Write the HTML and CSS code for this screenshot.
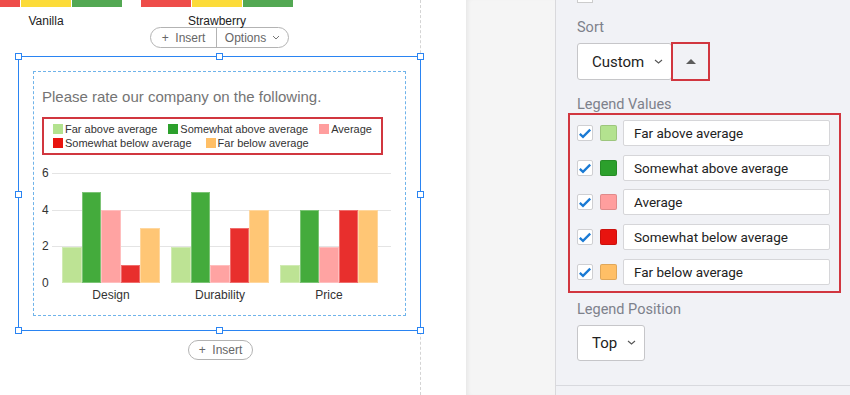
FILE: index.html
```html
<!DOCTYPE html>
<html>
<head>
    <title>Chart Options</title>
    <link rel="stylesheet" href="styles.css">
</head>
<body>
    <div class="screen">
        <div class="canvas">
            <div class="page">
                <div class="strips">
                    <div class="strip"><span class="seg seg-red"></span><span class="seg seg-yellow"></span><span class="seg seg-green"></span></div>
                    <div class="strip"><span class="seg seg-red"></span><span class="seg seg-yellow"></span><span class="seg seg-green"></span></div>
                </div>
                <div class="strip-labels">
                    <span>Vanilla</span>
                    <span>Strawberry</span>
                </div>
                <div class="pill pill-options">
                    <span class="pill-part pill-insert">+&nbsp; Insert</span>
                    <span class="pill-part pill-more">Options
                        <svg class="chev" width="8" height="5" viewBox="0 0 8 5"><path d="M1 1 L4 4 L7 1" fill="none" stroke="#777" stroke-width="1"/></svg>
                    </span>
                </div>

                <div class="selected">
                    <span class="handle h-tl"></span><span class="handle h-tc"></span><span class="handle h-tr"></span>
                    <span class="handle h-ml"></span><span class="handle h-mr"></span>
                    <span class="handle h-bl"></span><span class="handle h-bc"></span><span class="handle h-br"></span>

                    <div class="question">
                        <div class="q-title">Please rate our company on the following.</div>
                        <div class="legend">
                            <div class="legend-row">
                                <span class="legend-item"><i class="sw c1"></i>Far above average</span>
                                <span class="legend-item"><i class="sw c2"></i>Somewhat above average</span>
                                <span class="legend-item"><i class="sw c3"></i>Average</span>
                            </div>
                            <div class="legend-row">
                                <span class="legend-item"><i class="sw c4"></i>Somewhat below average</span>
                                <span class="legend-item"><i class="sw c5"></i>Far below average</span>
                            </div>
                        </div>
                        <div class="chart">
                            <div class="y-axis">
                                <span>6</span><span>4</span><span>2</span><span>0</span>
                            </div>
                            <div class="plot-wrap">
                                <div class="plot">
                                    <div class="group">
                                        <span class="bar b1" style="height: 36.5px"></span>
                                        <span class="bar b2" style="height: 91.25px"></span>
                                        <span class="bar b3" style="height: 73px"></span>
                                        <span class="bar b4" style="height: 18.25px"></span>
                                        <span class="bar b5" style="height: 54.75px"></span>
                                    </div>
                                    <div class="group">
                                        <span class="bar b1" style="height: 36.5px"></span>
                                        <span class="bar b2" style="height: 91.25px"></span>
                                        <span class="bar b3" style="height: 18.25px"></span>
                                        <span class="bar b4" style="height: 54.75px"></span>
                                        <span class="bar b5" style="height: 73px"></span>
                                    </div>
                                    <div class="group">
                                        <span class="bar b1" style="height: 18.25px"></span>
                                        <span class="bar b2" style="height: 73px"></span>
                                        <span class="bar b3" style="height: 36.5px"></span>
                                        <span class="bar b4" style="height: 73px"></span>
                                        <span class="bar b5" style="height: 73px"></span>
                                    </div>
                                </div>
                                <div class="cats">
                                    <span>Design</span>
                                    <span>Durability</span>
                                    <span>Price</span>
                                </div>
                            </div>
                        </div>
                    </div>
                </div>

                <div class="pill pill-bottom">
                    <span class="pill-part">+&nbsp; Insert</span>
                </div>
            </div>
        </div>

        <div class="gutter"></div>

        <div class="panel">
            <div class="settings">
                <div class="top-check"></div>

                <div class="field-label label-sort">Sort</div>
                <div class="sort-row">
                    <div class="select select-sort">Custom
                        <svg class="chev" width="9" height="5" viewBox="0 0 9 5"><path d="M1 1 L4.5 4 L8 1" fill="none" stroke="#555" stroke-width="1.1"/></svg>
                    </div>
                    <div class="sort-btn"><span class="tri"></span></div>
                </div>

                <div class="field-label label-values">Legend Values</div>
                <div class="values">
                    <div class="value-row">
                        <span class="check"><svg width="14" height="14" viewBox="0 0 14 14"><path d="M1.8 7.8 L5 10.8 L12.2 3.6" fill="none" stroke="#1a7ad4" stroke-width="2.3"/></svg></span>
                        <span class="swatch s1"></span>
                        <div class="text-input">Far above average</div>
                    </div>
                    <div class="value-row">
                        <span class="check"><svg width="14" height="14" viewBox="0 0 14 14"><path d="M1.8 7.8 L5 10.8 L12.2 3.6" fill="none" stroke="#1a7ad4" stroke-width="2.3"/></svg></span>
                        <span class="swatch s2"></span>
                        <div class="text-input">Somewhat above average</div>
                    </div>
                    <div class="value-row">
                        <span class="check"><svg width="14" height="14" viewBox="0 0 14 14"><path d="M1.8 7.8 L5 10.8 L12.2 3.6" fill="none" stroke="#1a7ad4" stroke-width="2.3"/></svg></span>
                        <span class="swatch s3"></span>
                        <div class="text-input">Average</div>
                    </div>
                    <div class="value-row">
                        <span class="check"><svg width="14" height="14" viewBox="0 0 14 14"><path d="M1.8 7.8 L5 10.8 L12.2 3.6" fill="none" stroke="#1a7ad4" stroke-width="2.3"/></svg></span>
                        <span class="swatch s4"></span>
                        <div class="text-input">Somewhat below average</div>
                    </div>
                    <div class="value-row">
                        <span class="check"><svg width="14" height="14" viewBox="0 0 14 14"><path d="M1.8 7.8 L5 10.8 L12.2 3.6" fill="none" stroke="#1a7ad4" stroke-width="2.3"/></svg></span>
                        <span class="swatch s5"></span>
                        <div class="text-input">Far below average</div>
                    </div>
                </div>

                <div class="field-label label-position">Legend Position</div>
                <div class="select select-pos">Top
                    <svg class="chev" width="9" height="5" viewBox="0 0 9 5"><path d="M1 1 L4.5 4 L8 1" fill="none" stroke="#555" stroke-width="1.1"/></svg>
                </div>
            </div>
        </div>
    </div>
</body>
</html>
```

FILE: styles.css
```css
body {
    margin: 0;
    font-family: "Liberation Sans", Arial, sans-serif;
    background-color: #fff;
}
.screen {
    display: flex;
    width: 850px;
    height: 395px;
    overflow: hidden;
}

/* left editing canvas */
.canvas {
    width: 466px;
    flex: none;
    background-color: #fff;
}
.page {
    width: 420px;
    height: 395px;
    border-right: 1px dashed #d4d4d4;
}
.strips,
.strip-labels {
    display: flex;
    gap: 19px;
    margin-left: -30px;
}
.strip {
    display: flex;
    gap: 1px;
    width: 152px;
}
.seg {
    width: 50px;
    height: 7px;
}
.seg-red { background-color: #ee4d4a; }
.seg-yellow { background-color: #fcdb39; }
.seg-green { background-color: #53a853; }
.strip-labels {
    margin-top: 7px;
    font-size: 12px;
    line-height: 14px;
    color: #222;
}
.strip-labels span {
    width: 152px;
    text-align: center;
}

.pill {
    display: flex;
    box-sizing: border-box;
    height: 21px;
    background-color: #fff;
    border: 1px solid #b3b3b3;
    border-radius: 11px;
    font-size: 12px;
    color: #666;
}
.pill-options {
    width: 139px;
    margin: -1px 0 0 150px;
}
.pill-part {
    display: flex;
    align-items: center;
    justify-content: center;
}
.pill-insert {
    width: 65px;
    border-right: 1px solid #b3b3b3;
}
.pill-more {
    flex: 1;
    gap: 6px;
}
.pill-bottom {
    width: 65px;
    height: 20px;
    margin: 9px 0 0 188px;
    justify-content: center;
}

.selected {
    position: relative;
    width: 403px;
    box-sizing: border-box;
    margin: 8px 0 0 18px;
    padding: 14px;
    border: 1px solid #2a84f2;
}
.handle {
    position: absolute;
    width: 7px;
    height: 7px;
    box-sizing: border-box;
    background-color: #fff;
    border: 1px solid #2a84f2;
}
.h-tl { left: -4px; top: -4px; }
.h-tc { left: 197px; top: -4px; }
.h-tr { right: -4px; top: -4px; }
.h-ml { left: -4px; top: 134px; }
.h-mr { right: -4px; top: 134px; }
.h-bl { left: -4px; bottom: -4px; }
.h-bc { left: 197px; bottom: -4px; }
.h-br { right: -4px; bottom: -4px; }

.question {
    border: 1px dashed #6fb3ea;
    padding: 16px 8px 13px 8px;
}
.q-title {
    font-size: 15px;
    line-height: 18px;
    color: #747474;
}
.legend {
    width: 341px;
    box-sizing: border-box;
    margin-top: 11px;
    padding: 3px 9px;
    border: 2px solid #d1363f;
    font-size: 11px;
    line-height: 14px;
    color: #333;
}
.legend-row {
    display: flex;
    gap: 11px;
    white-space: nowrap;
}
.legend-row + .legend-row {
    gap: 14px;
}
.legend-item {
    display: flex;
    align-items: center;
    flex: none;
}
.sw {
    width: 10px;
    height: 10px;
    margin-right: 2px;
}
.c1 { background-color: #b3e28f; }
.c2 { background-color: #2ca02c; }
.c3 { background-color: #ff9e9e; }
.c4 { background-color: #e8140f; }
.c5 { background-color: #ffbf66; }

.chart {
    display: flex;
    align-items: flex-start;
    margin-top: 18px;
}
.y-axis {
    display: flex;
    flex-direction: column;
    justify-content: space-between;
    width: 10px;
    height: 122px;
    margin-top: -6px;
    font-size: 12px;
    line-height: 12px;
    color: #333;
}
.plot-wrap {
    width: 339px;
}
.plot {
    display: flex;
    align-items: flex-end;
    gap: 11px;
    height: 110px;
    padding-left: 10px;
    background-image: repeating-linear-gradient(to bottom, #e4e4e4 0, #e4e4e4 1px, transparent 1px, transparent 36.5px);
}
.group {
    display: flex;
    align-items: flex-end;
    width: 98px;
    height: 100%;
}
.bar {
    flex: 1;
    box-sizing: border-box;
    box-shadow: inset 0 0 0 1px rgba(255, 255, 255, 0.3);
}
.b1 { background-color: #bde394; }
.b2 { background-color: #44ab3c; }
.b3 { background-color: #ffa3a2; }
.b4 { background-color: #e82f2d; }
.b5 { background-color: #ffc675; }
.cats {
    display: flex;
    gap: 11px;
    margin-top: 5px;
    padding-left: 10px;
    font-size: 12px;
    line-height: 14px;
    color: #333;
}
.cats span {
    width: 98px;
    text-align: center;
}

/* gap between canvas and panel */
.gutter {
    width: 89px;
    flex: none;
    background-color: #f5f5f5;
    box-shadow: inset 4px 0 4px -2px rgba(0, 0, 0, 0.06);
}

/* right settings panel */
.panel {
    flex: 1;
    background-color: #f1f2f6;
    border-left: 1px solid #d9d9dc;
    font-family: Roboto, "Liberation Sans", sans-serif;
}
.settings {
    padding: 0 0 24px 21px;
    border-bottom: 1px solid #d8d9de;
}
.top-check {
    width: 16px;
    height: 3px;
    box-sizing: border-box;
    background-color: #fff;
    border: 1px solid #ccc;
    border-top: none;
}
.field-label {
    font-size: 14.5px;
    line-height: 18px;
    color: #7d818b;
}
.label-sort { margin-top: 16px; }
.label-values { margin-top: 15px; line-height: 17px; }
.label-position { margin-top: 8px; }

.sort-row {
    display: flex;
    align-items: center;
    margin-top: 5px;
}
.select {
    display: flex;
    align-items: center;
    box-sizing: border-box;
    background-color: #fff;
    border: 1px solid #c6c6c9;
    border-radius: 3px;
    font-size: 15px;
    color: #222;
}
.select-sort {
    width: 95px;
    height: 37px;
    padding-left: 14px;
    gap: 10px;
}
.sort-btn {
    display: flex;
    align-items: center;
    justify-content: center;
    width: 39px;
    height: 39px;
    box-sizing: border-box;
    margin-left: -1px;
    border: 2px solid #d1363f;
}
.tri {
    width: 0;
    height: 0;
    border-left: 5px solid transparent;
    border-right: 5px solid transparent;
    border-bottom: 5px solid #5c5c5c;
}

.values {
    width: 273px;
    box-sizing: border-box;
    margin-left: -9px;
    padding: 5px 9px 6px 7px;
    border: 2px solid #d1363f;
}
.value-row {
    display: flex;
    align-items: center;
    height: 26px;
}
.value-row + .value-row {
    margin-top: 8.7px;
}
.check {
    display: flex;
    align-items: center;
    justify-content: center;
    width: 16px;
    height: 16px;
    box-sizing: border-box;
    background-color: #fff;
    border: 1px solid #cfcfd2;
    border-radius: 2px;
}
.swatch {
    width: 17px;
    height: 16px;
    box-sizing: border-box;
    margin-left: 7px;
    border-radius: 2px;
    border: 1px solid rgba(0, 0, 0, 0.12);
}
.s1 { background-color: #b3e28f; }
.s2 { background-color: #2ca02c; }
.s3 { background-color: #ff9e9e; }
.s4 { background-color: #e8140f; }
.s5 { background-color: #ffbf66; }
.text-input {
    display: flex;
    align-items: center;
    width: 207px;
    height: 26px;
    box-sizing: border-box;
    margin-left: 6px;
    padding-left: 10px;
    background-color: #fff;
    border: 1px solid #d6d6d9;
    border-radius: 2px;
    font-size: 13.5px;
    color: #222;
}

.select-pos {
    width: 68px;
    height: 36px;
    margin-top: 6px;
    padding-left: 14px;
    gap: 10px;
}
```
